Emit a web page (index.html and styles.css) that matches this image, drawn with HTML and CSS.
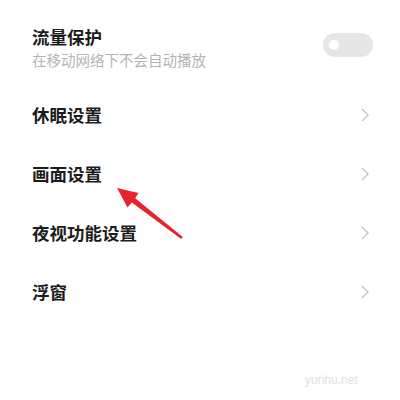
FILE: index.html
```html
<!DOCTYPE html>
<html lang="zh-CN">
<head>
    <meta charset="UTF-8">
    <meta name="viewport" content="width=device-width, initial-scale=1.0">
    <title>播放设置</title>
    <link rel="stylesheet" href="styles.css">
</head>
<body>
    <div class="settings">
        <!-- 流量保护 -->
        <div class="item item-switch">
            <div class="item-text">
                <div class="item-title">流量保护</div>
                <div class="item-desc">在移动网络下不会自动播放</div>
            </div>
            <div class="switch"><span class="knob"></span></div>
        </div>

        <div class="item">
            <div class="item-title">休眠设置</div>
            <svg class="chevron" width="8" height="14" viewBox="0 0 8 14"><polyline points="1,1 7,7 1,13" /></svg>
        </div>

        <div class="item">
            <div class="item-title">画面设置</div>
            <svg class="chevron" width="8" height="14" viewBox="0 0 8 14"><polyline points="1,1 7,7 1,13" /></svg>
        </div>

        <div class="item">
            <div class="item-title">夜视功能设置</div>
            <svg class="chevron" width="8" height="14" viewBox="0 0 8 14"><polyline points="1,1 7,7 1,13" /></svg>
        </div>

        <div class="item">
            <div class="item-title">浮窗</div>
            <svg class="chevron" width="8" height="14" viewBox="0 0 8 14"><polyline points="1,1 7,7 1,13" /></svg>
        </div>
    </div>

    <!-- red pointer arrow -->
    <svg class="pointer" width="400" height="400" viewBox="0 0 400 400">
        <polygon points="117,188 138.5,193 135.2,198.3 182.8,237 181.2,239 131.8,202.5 127.5,207.5" />
    </svg>

    <div class="watermark">yunhu.net</div>
</body>
</html>
```

FILE: styles.css
```css
body {
    margin: 0;
    background: #ffffff;
    font-family: "Noto Sans CJK SC", "Noto Sans", sans-serif;
    color: #1c1c1c;
}

.settings {
    display: flex;
    flex-direction: column;
}

.item {
    display: flex;
    align-items: center;
    justify-content: space-between;
    height: 59px;
    padding: 0 31px 0 32px;
}

.item-switch {
    height: auto;
    align-items: flex-start;
    padding: 26px 27px 16px 32px;
}

.item-title {
    font-size: 17.5px;
    font-weight: 700;
    line-height: 22px;
}

.item-desc {
    margin-top: 3px;
    font-size: 14.5px;
    line-height: 18px;
    color: #b4b4b4;
}

.switch {
    width: 50px;
    height: 24px;
    margin-top: 7px;
    border-radius: 12px;
    background: #e6e6e6;
    display: flex;
    align-items: center;
    padding-left: 6px;
    box-sizing: border-box;
}

.knob {
    width: 10px;
    height: 10px;
    border-radius: 50%;
    background: #ffffff;
}

.chevron polyline {
    fill: none;
    stroke: #c4c4c4;
    stroke-width: 1.4;
}

.pointer {
    position: absolute;
    top: 0;
    left: 0;
}

.pointer polygon {
    fill: #e8232b;
}

.watermark {
    position: absolute;
    left: 305px;
    top: 373px;
    font-family: "Liberation Sans", Arial, sans-serif;
    font-size: 12px;
    color: #e2e2e2;
}
```
